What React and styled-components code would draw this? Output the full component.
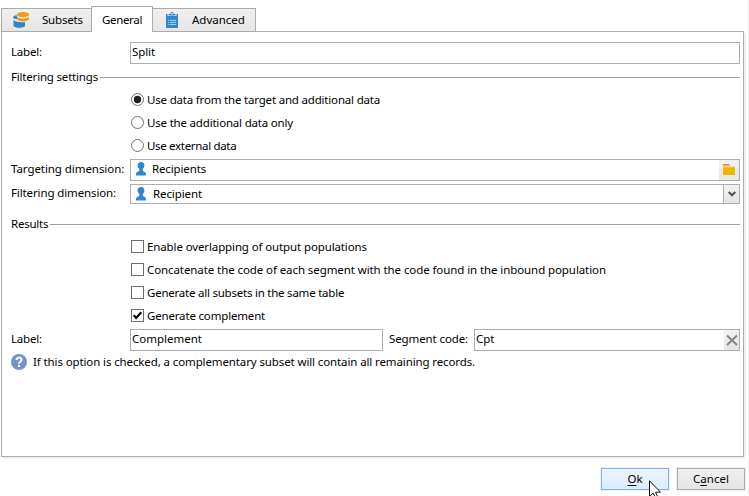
import React from 'react';
import styled, { createGlobalStyle, css } from 'styled-components';

const GlobalStyle = createGlobalStyle`
  * { box-sizing: border-box; }
  body {
    margin: 0;
    background: #fff;
    color: #000;
    font: 11.5px/16px "Noto Sans", "Open Sans", sans-serif;
    overflow: hidden;
  }
`;

const line = '#abadb3';

const Dialog = styled.main`
  width: 749px;
  height: 496px;
  padding: 6px 5px 0 1px;
  border-right: 1px solid #f0f0f0;
  display: flex;
  flex-direction: column;
  overflow: hidden;
  position: relative;
`;

const Text = styled.span`
  white-space: nowrap;
  letter-spacing: ${(p) => p.$spacing || 0}px;
`;

const Tabs = styled.nav`
  display: flex;
  align-items: flex-end;
  height: 26px;
  position: relative;
  z-index: 1;
`;

const Tab = styled.button`
  display: flex;
  align-items: center;
  height: 24px;
  width: ${(p) => p.$width}px;
  padding: 0 0 1px 10px;
  border: 1px solid #acacac;
  background: linear-gradient(#f0f0f0, #e5e5e5);
  font: inherit;
  color: inherit;
  ${(p) => p.$first && css`border-right: 0;`}
  ${(p) => p.$after && css`border-left: 0;`}
  ${(p) => p.$active && css`
    height: 26px;
    border-bottom: 0;
    padding: 0 0 0 10px;
    background: #fff;
  `}
`;

const TabIcon = styled.svg`
  width: 18px;
  height: 18px;
  flex: none;
  margin-right: ${(p) => p.$gap}px;
`;

const Panel = styled.section`
  width: 743px;
  height: 426px;
  margin-top: -1px;
  padding: 10px 3px 0 9px;
  border: 1px solid #acacac;
  box-shadow: 2px 2px 0 #f0f0f0;
`;

const Row = styled.div`
  display: flex;
  align-items: center;
  height: ${(p) => p.$height || 22}px;
  margin-top: ${(p) => p.$gap || 0}px;
`;

const FieldLabel = styled.label`
  flex: none;
  width: ${(p) => p.$width || 119}px;
  padding-left: ${(p) => p.$indent || 0}px;
  margin-top: -3px;
`;

const Field = styled.div`
  display: flex;
  align-items: stretch;
  height: 100%;
  width: ${(p) => p.$width || 610}px;
  border: 1px solid ${line};
  background: #fff;
`;

const FieldValue = styled.div`
  flex: 1;
  display: flex;
  align-items: center;
  padding: 0 0 ${(p) => p.$lift ?? 2}px ${(p) => p.$left || 1}px;
`;

const FieldButton = styled.button`
  display: flex;
  align-items: center;
  justify-content: center;
  width: ${(p) => p.$width}px;
  padding: 0;
  border: 0;
  border-left: ${(p) => (p.$divided ? `1px solid ${line}` : '0')};
  background: linear-gradient(#f2f2f2, #e5e5e5);
`;

const PersonSvg = styled.svg`
  width: 10px;
  height: 14px;
  margin-right: ${(p) => p.$gap}px;
`;

const Section = styled.div`
  display: flex;
  align-items: center;
  height: 22px;
  gap: 2px;
  margin-top: ${(p) => p.$gap}px;
  &::after {
    content: '';
    flex: 1;
    height: 1px;
    margin-top: 1px;
    background: #a0a0a0;
  }
`;

const Option = styled.label`
  display: flex;
  align-items: center;
  gap: 3px;
  height: 23px;
  padding-left: 120px;
`;

const Mark = styled.svg`
  width: 13px;
  height: 13px;
  flex: none;
`;

const Help = styled.div`
  display: flex;
  align-items: center;
  gap: 6px;
  height: 22px;
`;

const Actions = styled.footer`
  display: flex;
  justify-content: flex-end;
  gap: 8px;
  margin: 11px -2px 0 0;
`;

const Button = styled.button`
  width: 68px;
  height: 22px;
  padding: 0 0 1px;
  border: 1px solid ${(p) => (p.$hot ? '#7eb4ea' : '#acacac')};
  background: ${(p) => (p.$hot ? 'linear-gradient(#ecf4fc, #dcecfc)' : 'linear-gradient(#f0f0f0, #e5e5e5)')};
  box-shadow: 0 0 0 1px #f0f0f0;
  font: inherit;
  color: inherit;
  u { text-underline-offset: 2px; }
`;

const Pointer = styled.svg`
  position: absolute;
  left: 649px;
  top: 480px;
  width: 12px;
  height: 19px;
`;

const Person = ({ gap }) => (
  <PersonSvg viewBox="0 0 10 14" $gap={gap}>
    <path fill="#2f87d0" d="M5 0C7.2 0 8.4 1.4 8.4 3.4C8.4 5 7.700 6 6.800 6.700V8.500C6.800 9.800 10 9.500 10 12V13.500H0V12C0 9.500 3.200 9.800 3.200 8.500V6.700C2.300 6 1.600 5 1.600 3.400C1.600 1.400 2.800 0 5 0Z" />
  </PersonSvg>
);

const Radio = ({ checked, spacing, children }) => (
  <Option>
    <Mark viewBox="0 0 13 13">
      <circle cx="6.5" cy="6.5" r="6" fill="#fff" stroke="#707070" />
      {checked && <circle cx="6.5" cy="6.5" r="3.7" fill="#212121" />}
    </Mark>
    <Text $spacing={spacing}>{children}</Text>
  </Option>
);

const Check = ({ checked, spacing, children }) => (
  <Option>
    <Mark viewBox="0 0 13 13">
      <rect x=".5" y=".5" width="12" height="12" fill="#fff" stroke="#707070" />
      {checked && <path d="M2.700 6.300L5.200 9L10.300 3.200" fill="none" stroke="#000" strokeWidth="2.100" />}
    </Mark>
    <Text $spacing={spacing}>{children}</Text>
  </Option>
);

export default function App() {
  return (
    <Dialog>
      <GlobalStyle />
      <Tabs>
        <Tab $width={90} $first>
          <TabIcon viewBox="0 0 18 18" $gap={12}>
            <path fill="#2f87d0" d="M1 6C1.500 4.800 3 4.300 5 4.300V8.200C3 8.200 1 7.500 1 6ZM1.500 9C4 11 9 11.700 13 11V15C12 17.400 2.500 17.400 1.500 15Z" />
            <ellipse cx="11" cy="3.600" rx="6.200" ry="2.700" fill="#ee9c1c" />
            <path fill="#ee9c1c" d="M5 5.800C7 7.800 15 7.800 17 5.800V8C16 11.200 6 11.200 5 8Z" />
            <path d="M4.800 5C7 7.500 15 7.500 17.200 5" fill="none" stroke="#fbe0b4" strokeWidth=".8" />
          </TabIcon>
          <Text $spacing={-0.2}>Subsets</Text>
        </Tab>
        <Tab $width={62} $active>
          <Text $spacing={-0.34}>General</Text>
        </Tab>
        <Tab $width={103} $after>
          <TabIcon viewBox="0 0 18 18" $gap={11}>
            <path fill="#2f87d0" d="M3 3H4.500V5.500H13.500V3H15V17H3Z" />
            <path fill="#2f87d0" d="M3 5H15V6H3Z" />
            <path fill="#2f87d0" d="M5.500 4.600V3H7.300C7.300 .4 10.700 .4 10.700 3H12.500V4.600Z" />
            <path d="M5 9.500H6M7 9.500H13M5 11.500H6M7 11.500H13M5 13.500H6M7 13.500H13" fill="none" stroke="#a9cdec" />
            <circle cx="9" cy="2.600" r=".8" fill="#fff" />
          </TabIcon>
          <Text>Advanced</Text>
        </Tab>
      </Tabs>

      <Panel>
        <Row>
          <FieldLabel><Text $spacing={-0.18}>Label:</Text></FieldLabel>
          <Field><FieldValue><Text $spacing={-0.1}>Split</Text></FieldValue></Field>
        </Row>

        <Section $gap={2}><Text $spacing={-0.19}>Filtering settings</Text></Section>
        <Radio checked spacing={-0.187}>Use data from the target and additional data</Radio>
        <Radio spacing={-0.19}>Use the additional data only</Radio>
        <Radio spacing={-0.32}>Use external data</Radio>

        <Row $gap={2}>
          <FieldLabel><Text $spacing={-0.06}>Targeting dimension:</Text></FieldLabel>
          <Field>
            <FieldValue $left={5}><Person gap={6} /><Text $spacing={-0.14}>Recipients</Text></FieldValue>
            <FieldButton $width={20}>
              <svg width="12" height="12" viewBox="0 0 12 12">
                <path fill="#ee8e1c" d="M0 0H6L7 2V3H0Z" />
                <path fill="#f8d9a0" d="M1 1.500H6V2.300H12V3.500H0V2.300H1Z" />
                <path fill="#efb700" d="M0 3.200H12V11H0Z" />
              </svg>
            </FieldButton>
          </Field>
        </Row>
        <Row $gap={3} $height={20}>
          <FieldLabel><Text $spacing={-0.12}>Filtering dimension:</Text></FieldLabel>
          <Field>
            <FieldValue $left={5} $lift={0}><Person gap={7} /><Text $spacing={-0.1}>Recipient</Text></FieldValue>
            <FieldButton $width={16} $divided>
              <svg width="8" height="7" viewBox="0 0 8 7">
                <path d="M.7 1L4 4.300L7.300 1" fill="none" stroke="#505050" strokeWidth="2" />
              </svg>
            </FieldButton>
          </Field>
        </Row>

        <Section $gap={9}><Text $spacing={-0.24}>Results</Text></Section>
        <Check spacing={-0.12}>Enable overlapping of output populations</Check>
        <Check spacing={-0.087}>Concatenate the code of each segment with the code found in the inbound population</Check>
        <Check spacing={-0.23}>Generate all subsets in the same table</Check>
        <Check checked spacing={-0.17}>Generate complement</Check>

        <Row $gap={2}>
          <FieldLabel><Text $spacing={-0.18}>Label:</Text></FieldLabel>
          <Field $width={253}><FieldValue><Text>Complement</Text></FieldValue></Field>
          <FieldLabel $width={91} $indent={6}><Text $spacing={-0.11}>Segment code:</Text></FieldLabel>
          <Field $width={266}>
            <FieldValue><Text>Cpt</Text></FieldValue>
            <FieldButton $width={15}>
              <svg width="12" height="12" viewBox="0 0 12 12">
                <path d="M1 1.500L11 11M11 1.500L1 11" stroke="#858585" strokeWidth="2" />
              </svg>
            </FieldButton>
          </Field>
        </Row>
        <Help>
          <svg width="16" height="16" viewBox="0 0 16 16">
            <circle cx="8" cy="8" r="8" fill="#7695c6" />
            <path d="M5.500 6C5.500 2.800 10.500 2.800 10.500 5.800C10.500 7.800 8 7.700 8 9.700" fill="none" stroke="#fff" strokeWidth="1.900" />
            <rect x="7" y="11" width="2" height="2" fill="#fff" />
          </svg>
          <Text $spacing={-0.115}>If this option is checked, a complementary subset will contain all remaining records.</Text>
        </Help>
      </Panel>

      <Actions>
        <Button $hot><Text><u>O</u>k</Text></Button>
        <Button><Text>C<u>a</u>ncel</Text></Button>
      </Actions>
      <Pointer viewBox="0 0 12 19">
        <path d="M.5 .8V16.500L4.200 13L6.700 18.500L9 17.500L6.600 12.200H11.500Z" fill="#fff" stroke="#111" />
      </Pointer>
    </Dialog>
  );
}
